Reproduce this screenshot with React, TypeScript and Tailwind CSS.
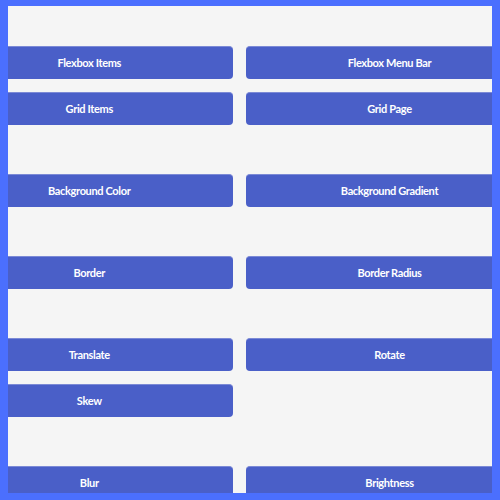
import React from "react";

const sections: string[][] = [
  ["Flexbox Items", "Flexbox Menu Bar", "Grid Items", "Grid Page"],
  ["Background Color", "Background Gradient"],
  ["Border", "Border Radius"],
  ["Translate", "Rotate", "Skew"],
  ["Blur", "Brightness", "Contrast", "Grayscale"],
];

export default function App() {
  return (
    <div
      className="w-[500px] h-[500px] bg-[#4b6ffe] pt-[6px] pl-[8px] pr-[8px] pb-[7px]"
      style={{ fontFamily: "Lato, 'Open Sans', sans-serif" }}
    >
      <div className="w-full h-full bg-[#f5f5f5] overflow-hidden">
        <div className="ml-[-62px] pt-[39.7px] flex flex-col gap-[48.6px]">
          {sections.map((items, i) => (
            <div key={i} className="grid grid-cols-[286.5px_288px] gap-x-[13px] gap-y-[12.6px]">
              {items.map((label) => (
                <button
                  key={label}
                  className="h-[33.4px] rounded-[4px] bg-[#4a5fc8] border-t border-[#7c8ad6] text-white font-bold text-[11px] tracking-[-0.35px] flex items-center justify-center"
                >
                  {label}
                </button>
              ))}
            </div>
          ))}
        </div>
      </div>
    </div>
  );
}
